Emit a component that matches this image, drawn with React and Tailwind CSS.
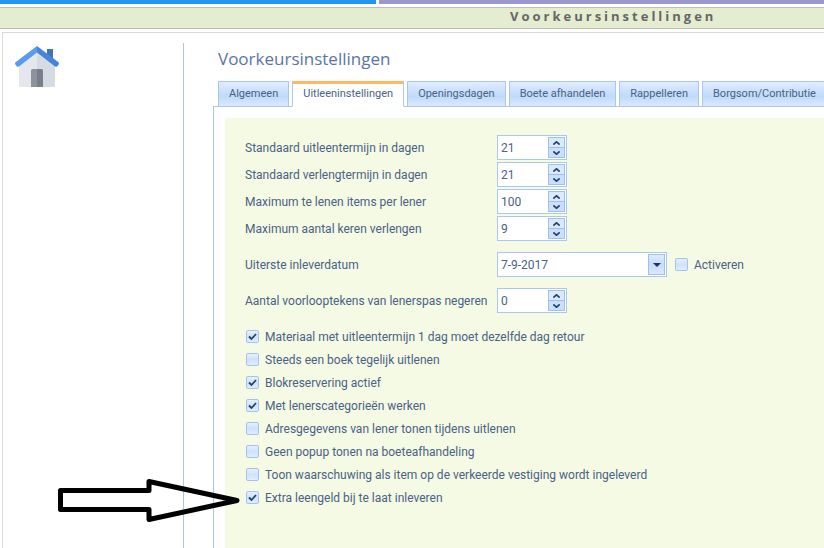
import { useState } from "react";

const TABS = [
  "Algemeen",
  "Uitleeninstellingen",
  "Openingsdagen",
  "Boete afhandelen",
  "Rappelleren",
  "Borgsom/Contributie",
];

const LIMITS = [
  { id: "uitleentermijn", label: "Standaard uitleentermijn in dagen", value: 21 },
  { id: "verlengtermijn", label: "Standaard verlengtermijn in dagen", value: 21 },
  { id: "maxitems", label: "Maximum te lenen items per lener", value: 100 },
  { id: "maxverlengen", label: "Maximum aantal keren verlengen", value: 9 },
];

const OPTIONS = [
  { label: "Materiaal met uitleentermijn 1 dag moet dezelfde dag retour", checked: true },
  { label: "Steeds een boek tegelijk uitlenen", checked: false },
  { label: "Blokreservering actief", checked: true },
  { label: "Met lenerscategorieën werken", checked: true },
  { label: "Adresgegevens van lener tonen tijdens uitlenen", checked: false },
  { label: "Geen popup tonen na boeteafhandeling", checked: false },
  { label: "Toon waarschuwing als item op de verkeerde vestiging wordt ingeleverd", checked: false },
  { label: "Extra leengeld bij te laat inleveren", checked: true },
];

const HouseIcon = () => (
  <svg viewBox="0 0 44 41" className="h-[41px] w-11" aria-hidden="true">
    <path d="M32 3h6v14l-6-5z" fill="#3f76b5" />
    <path d="M4 18 22 3v38H5.500a1.500 1.500 0 0 1-1.500-1.500z" fill="#e4e8ec" />
    <path d="M22 3l18 15v21.500a1.500 1.500 0 0 1-1.500 1.500H22z" fill="#d6dae2" />
    <path d="M16 41V24.500a1.500 1.500 0 0 1 1.500-1.500H22v18z" fill="#8c939d" />
    <path d="M22 23h4.500a1.500 1.500 0 0 1 1.500 1.500V41h-6z" fill="#787e8b" />
    <path d="M22 0v6.500L4.300 20.300a2 2 0 0 1-2.800-.3l-1-1.300a2 2 0 0 1 .3-2.700z" fill="#5b9bec" />
    <path d="M22 0v6.500l17.700 13.800a2 2 0 0 0 2.800-.3l1-1.300a2 2 0 0 0-.3-2.700z" fill="#4784da" />
  </svg>
);

const Chevron = ({ up }) => (
  <svg viewBox="0 0 7 4" className="h-1 w-[7px]" fill="none" stroke="#22436f" strokeWidth="1.700">
    <path d={up ? "M.3 3.600l3.200-2.800 3.200 2.800" : "M.3.400l3.200 2.800L6.700.400"} />
  </svg>
);

const NumberField = ({ id, label, initial }) => {
  const [value, setValue] = useState(initial);

  return (
    <div className="flex items-center">
      <label htmlFor={id} className="w-[252px] shrink-0 whitespace-nowrap">
        {label}
      </label>
      <div className="flex h-[25px] w-[70px] border border-[#a9c7ef] bg-white p-px">
        <input
          id={id}
          type="text"
          inputMode="numeric"
          value={value}
          onChange={(e) => setValue(Number(e.target.value) || 0)}
          className="w-0 grow bg-transparent pl-0.5 outline-none"
        />
        <div className="flex w-[17px] flex-col border border-[#a0c0ea]">
          <button
            type="button"
            aria-label={`${label} verhogen`}
            onClick={() => setValue((v) => v + 1)}
            className="flex flex-1 items-center justify-center bg-[#dbe9fd]"
          >
            <Chevron up />
          </button>
          <button
            type="button"
            aria-label={`${label} verlagen`}
            onClick={() => setValue((v) => Math.max(0, v - 1))}
            className="flex flex-1 items-center justify-center border-t border-[#a0c0ea] bg-[#c9dffb]"
          >
            <Chevron />
          </button>
        </div>
      </div>
    </div>
  );
};

const CheckOption = ({ label, defaultChecked }) => (
  <label className="flex h-[23px] items-center gap-1.5 whitespace-nowrap">
    <span className="grid size-[13px] shrink-0">
      <input
        type="checkbox"
        defaultChecked={defaultChecked}
        className="peer col-start-1 row-start-1 size-[13px] appearance-none rounded-[2px] border border-[#a3c2ec] bg-linear-to-b from-[#e6f0ff] via-[#cfe1fb] to-[#e0edff]"
      />
      <svg
        viewBox="0 0 13 13"
        className="pointer-events-none invisible col-start-1 row-start-1 size-[13px] peer-checked:visible"
        fill="none"
        stroke="#22436f"
        strokeWidth="1.800"
      >
        <path d="M3 6.500l2.500 2.500L10 4" />
      </svg>
    </span>
    {label}
  </label>
);

export default function App() {
  const [activeTab, setActiveTab] = useState("Uitleeninstellingen");

  return (
    <div className="relative flex min-h-screen flex-col overflow-hidden bg-white font-[Roboto,'Noto_Sans',sans-serif] text-xs text-[#4a6285]">
      <div className="flex h-1 gap-[3px]">
        <div className="w-[376px] bg-[#2196f3]" />
        <div className="grow bg-[#9999cf]" />
      </div>

      <header className="mt-[3px] h-[22px] border-y border-[#bdbdbd] bg-[#e4edcf] pl-[510px] font-['Open_Sans',sans-serif] text-[13px] leading-4 font-bold tracking-[3px] text-[#666]">
        Voorkeursinstellingen
      </header>

      <div className="mt-[3px] ml-0.5 flex grow border-t border-l border-[#d9d9d9]">
        <aside className="mt-2.5 w-[181px] shrink-0 border-r border-[#a9c7ef] pt-[3px] pl-3">
          <a href="#home" aria-label="Home" className="block w-11">
            <HouseIcon />
          </a>
        </aside>

        <main className="flex min-w-0 grow flex-col pl-[29px]">
          <h1 className="mt-3 ml-[5px] font-['Open_Sans',sans-serif] text-[17px] leading-7 text-[#5a74a8]">
            Voorkeursinstellingen
          </h1>

          <div role="tablist" className="z-10 mt-2 -mb-px ml-[5px] flex h-[26px] gap-[3px]">
            {TABS.map((tab) => (
              <button
                key={tab}
                type="button"
                role="tab"
                aria-selected={tab === activeTab}
                onClick={() => setActiveTab(tab)}
                className={`shrink-0 border border-[#a9c7ef] px-2.5 text-[11px] whitespace-nowrap ${
                  tab === activeTab
                    ? "border-t-[3px] border-t-[#ffb761] border-b-white bg-white pb-0.5"
                    : "bg-linear-to-b from-[#e0ecff] from-0% via-[#bfdafa] via-60% to-[#dbe9fd]"
                }`}
              >
                {tab}
              </button>
            ))}
          </div>

          <div role="tabpanel" className="flex grow flex-col border-t border-l border-[#a9c7ef] pt-[11px] pl-[11px]">
            <form className="grow bg-[#f4fae4] pt-[17px] pb-6 pl-5">
              <div className="flex flex-col gap-0.5">
                {LIMITS.map((item) => (
                  <NumberField key={item.id} id={item.id} label={item.label} initial={item.value} />
                ))}
              </div>

              <div className="my-[11px] flex items-center">
                <label htmlFor="inleverdatum" className="w-[252px] shrink-0">
                  Uiterste inleverdatum
                </label>
                <div className="mr-2 flex h-[25px] w-[170px] border border-[#a9c7ef] bg-white p-px">
                  <input
                    id="inleverdatum"
                    type="text"
                    defaultValue="7-9-2017"
                    className="w-0 grow bg-transparent pl-0.5 outline-none"
                  />
                  <button
                    type="button"
                    aria-label="Kalender openen"
                    className="flex w-[17px] items-center justify-center border border-[#a0c0ea] bg-linear-to-b from-[#e0ecff] via-[#c5dcfa] to-[#dbe9fd]"
                  >
                    <svg viewBox="0 0 8 4" className="h-1 w-2" fill="#1f3554">
                      <path d="M0 0h8L4 4z" />
                    </svg>
                  </button>
                </div>
                <CheckOption label="Activeren" />
              </div>

              <NumberField id="voorlooptekens" label="Aantal voorlooptekens van lenerspas negeren" initial={0} />

              <div className="mt-3 ml-px flex flex-col">
                {OPTIONS.map((option) => (
                  <CheckOption key={option.label} label={option.label} defaultChecked={option.checked} />
                ))}
              </div>
            </form>
          </div>
        </main>
      </div>

      {/* Arrow pointing at the last option */}
      <svg
        viewBox="0 0 184 46"
        className="pointer-events-none absolute top-[477px] left-[57px] z-20 h-[46px] w-[184px]"
        fill="none"
        stroke="black"
        strokeWidth="5"
        strokeLinejoin="round"
        aria-hidden="true"
      >
        <path d="M3.500 13.500H92V4.500L180 23.500 92 42.500v-10H3.500z" />
      </svg>
    </div>
  );
}
